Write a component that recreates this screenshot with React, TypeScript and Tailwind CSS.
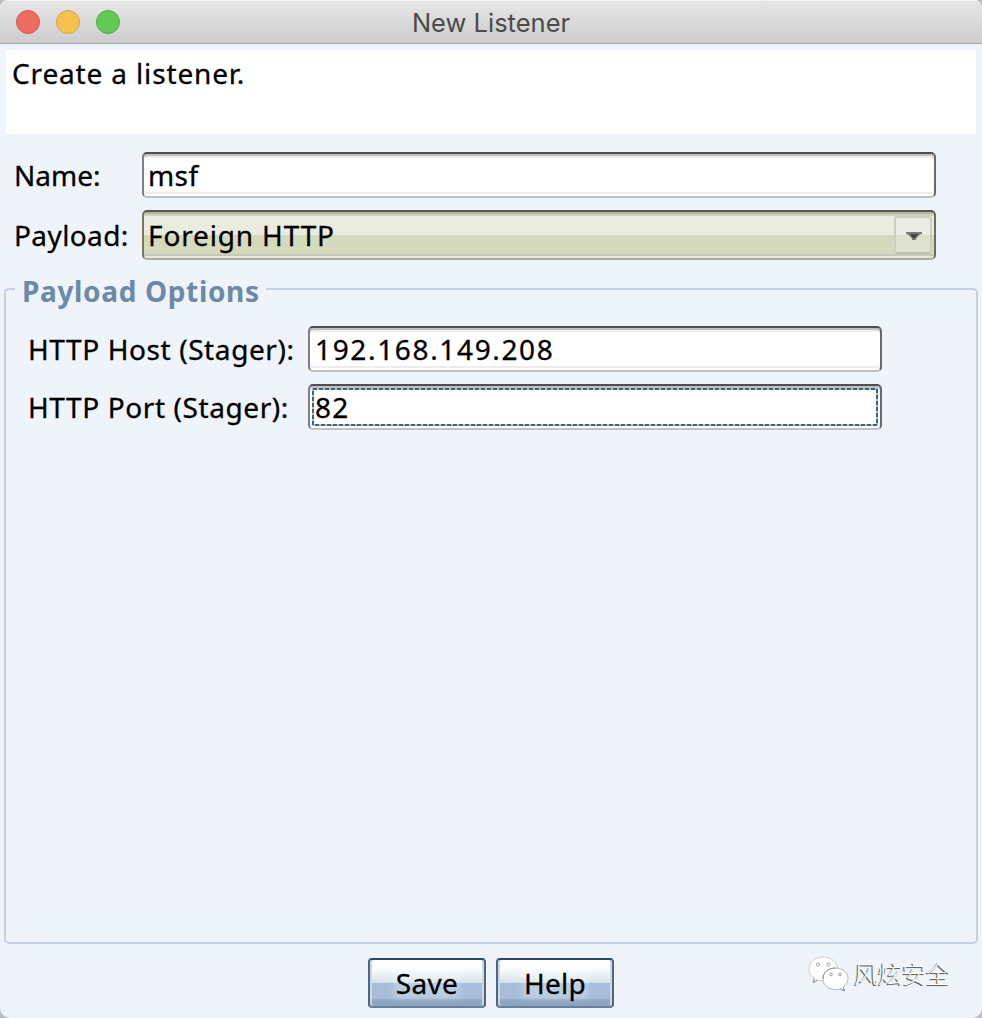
import type { ReactNode } from 'react';

const fieldFrame =
  'relative flex h-[46px] items-center rounded-[5px] border-2 border-t-[#4f4f51] border-r-[#69696a] border-b-[#bfc0c3] border-l-[#808081] bg-white shadow-[inset_0_2px_0_#c0c0c0,inset_0_4px_0_#ededed,inset_0_-2px_0_#fff,inset_0_-4px_0_#ededed]';

function Label({ children, className }: { children: ReactNode; className: string }) {
  return <span className={`shrink-0 whitespace-nowrap ${className}`}>{children}</span>;
}

function FocusRing() {
  return (
    <svg className="absolute top-[2px] left-[2px]" width="566" height="38" fill="none">
      <rect x="1" y="1" width="564" height="36" stroke="#b6c3cc" strokeWidth="2" />
      <rect x="1" y="1" width="564" height="36" stroke="#42607f" strokeWidth="2" strokeDasharray="4 2" />
    </svg>
  );
}

function ActionButton({ children }: { children: string }) {
  return (
    <button className="relative flex h-[50px] w-[118px] items-center justify-center rounded-[4px] border-2 border-t-[#2e4964] border-r-[#4b6784] border-b-[#66819d] border-l-[#4b6784] bg-[linear-gradient(#fff_0px,#fdfefe_8px,#d7e0e7_23px,#a5bdd9_23px,#a9bfd9_38px,#90a8c2_40px,#8ba3bf_46px)] shadow-[inset_2px_0_0_#ced9e5,inset_-2px_0_0_#ced9e5]">
      <span className="absolute inset-x-[24px] top-[10px] bottom-[7px] bg-white/25 blur-[3px]" />
      <span className="relative tracking-[0.3px]">{children}</span>
    </button>
  );
}

function ChatLogo() {
  return (
    <svg width="41" height="36" viewBox="0 0 41 36" fill="#fff" stroke="#9a9b9f" strokeWidth="0.7">
      <path d="M15 1C7 1 1 6 1 13c0 4 2 7 5.500 9.300L5 26.500l5-2.500c2 .7 4 .9 6.500.7C29 24 30 17 30 13 29 6 23 1 15 1Z" stroke="#b9babe" />
      <path d="M27.500 12C20 12 15 16.500 15 23s6 10.500 12.500 10.500c1.600 0 3.200-.2 4.700-.7l4.300 2-1.200-3.700C38 29 40 26 40 22.600 40 16.500 34 12 27.500 12Z" />
      <path d="M15 23c0-6.500 5-11 12.500-11M6.500 22.300 5 26.500l5-2.500M32.200 32.800l4.300 2-1.200-3.700" fill="none" stroke="#77787c" />
      <g stroke="#77787c">
        <circle cx="10" cy="8.500" r="1.600" />
        <circle cx="20.500" cy="8.500" r="1.600" />
        <circle cx="23" cy="18.500" r="1.300" />
        <circle cx="32" cy="18.500" r="1.300" />
      </g>
    </svg>
  );
}

export default function App() {
  return (
    <div className="h-[1018px] w-[982px] bg-[#b9bcc3]">
      <main className="flex h-full flex-col overflow-hidden rounded-t-[8px] rounded-b-[10px] bg-[#eff3fa] font-['Noto_Sans',sans-serif] text-[28px] leading-none text-black [-webkit-text-stroke:0.3px_currentColor]">
        <header className="grid h-[44px] shrink-0 grid-cols-[200px_1fr_200px] items-center border-b border-[#a9a9a9] bg-linear-to-b from-[#e7e7e7] to-[#cdcdcd] shadow-[inset_0_1px_0_#f4f4f4]">
          <div className="flex gap-[16px] pl-[16px]">
            <span className="size-[24px] rounded-full border border-[#d9574f] bg-[#ed6b60]" />
            <span className="size-[24px] rounded-full border border-[#d9a243] bg-[#f6c151]" />
            <span className="size-[24px] rounded-full border border-[#4fae42] bg-[#63c856]" />
          </div>
          <h1 className="pt-[3px] text-center font-['Inter',sans-serif] text-[25.5px] font-normal text-[#4b4b4b] [-webkit-text-stroke:0px]">New Listener</h1>
        </header>

        <div className="mx-[6px] mt-[6px] h-[84px] shrink-0 bg-white pt-[9px] pl-[6px]">
          <Label className="tracking-[0.85px]">Create a listener.</Label>
        </div>

        <section className="mt-[18px] flex shrink-0 flex-col gap-[12px] pr-[46px] pl-[14px]">
          <div className="flex h-[46px] items-center">
            <Label className="w-[128px]">Name:</Label>
            <div className={`${fieldFrame} w-[794px] pl-[4px]`}>
              <Label className="tracking-[0.4px]">msf</Label>
            </div>
          </div>
          <div className="flex h-[50px] items-center">
            <Label className="w-[128px] tracking-[0.4px]">Payload:</Label>
            <div className="flex h-[50px] w-[794px] items-center justify-between rounded-[5px] border-2 border-t-[#59594a] border-r-[#6b6d55] border-b-[#abae9e] border-l-[#77795f] bg-[linear-gradient(#b3b5a4_0px,#b3b5a4_2px,#cfd2c0_2px,#cfd2c0_4px,#eaecdf_4px,#eaecdf_23px,#d6dabd_23px,#d6dabd_42px,#c6c9ba_42px,#c6c9ba_44px,#e8ead9_44px)] pr-[2px] pl-[4px]">
              <Label className="tracking-[0.85px]">Foreign HTTP</Label>
              <span className="flex h-[38px] w-[38px] items-center justify-center rounded-[3px] border-2 border-[#cdd0bd] border-b-[#bfc2ac] bg-[linear-gradient(#ebede5_17px,#dfe1d0_17px)] pt-[2px] pl-[2px]">
                <svg className="shrink-0" width="16" height="8" viewBox="0 0 16 8">
                  <path d="M0 0h16v2l-2 .5-4 4V8H6V6.500l-4-4L0 2Z" fill="#777870" />
                  <path d="M4 2h8L9 6H7Z" fill="#444444" />
                </svg>
              </span>
            </div>
          </div>
        </section>

        <fieldset className="mx-[4px] mt-[14px] h-[670px] min-w-0 shrink-0 rounded-[5px] border-2 border-[#c3d1e3]">
          <legend className="ml-[9px] h-[30px] pr-[6px] pl-[7px] leading-[34px] font-bold tracking-[0.65px] text-[#6b89a8] [-webkit-text-stroke:0px]">Payload Options</legend>
          <div className="flex flex-col gap-[12px] pt-[22px] pl-[22px]">
            <div className="flex items-center">
              <Label className="w-[280px] tracking-[0.6px]">HTTP Host (Stager):</Label>
              <div className={`${fieldFrame} w-[574px] pl-[5px]`}>
                <Label className="tracking-[1.65px]">192.168.149.208</Label>
              </div>
            </div>
            <div className="flex items-center">
              <Label className="w-[280px] tracking-[0.6px]">HTTP Port (Stager):</Label>
              <div className={`${fieldFrame} w-[574px] pl-[5px]`}>
                <Label className="tracking-[1.2px]">82</Label>
                <FocusRing />
              </div>
            </div>
          </div>
        </fieldset>

        <footer className="grid h-[74px] shrink-0 grid-cols-[368px_246px_1fr] pt-[14px]">
          <div className="col-start-2 flex gap-[10px]">
            <ActionButton>Save</ActionButton>
            <ActionButton>Help</ActionButton>
          </div>
          <div className="flex h-[32px] items-center gap-[5px] pl-[194px] [-webkit-text-stroke:0px]">
            <ChatLogo />
            <span className="pb-[2px] font-['Noto_Sans_CJK_SC',sans-serif] text-[24px] leading-none font-light whitespace-nowrap text-white [text-shadow:-1px_1px_0_#666,-1px_1px_1px_#777]">风炫安全</span>
          </div>
        </footer>
      </main>
    </div>
  );
}
